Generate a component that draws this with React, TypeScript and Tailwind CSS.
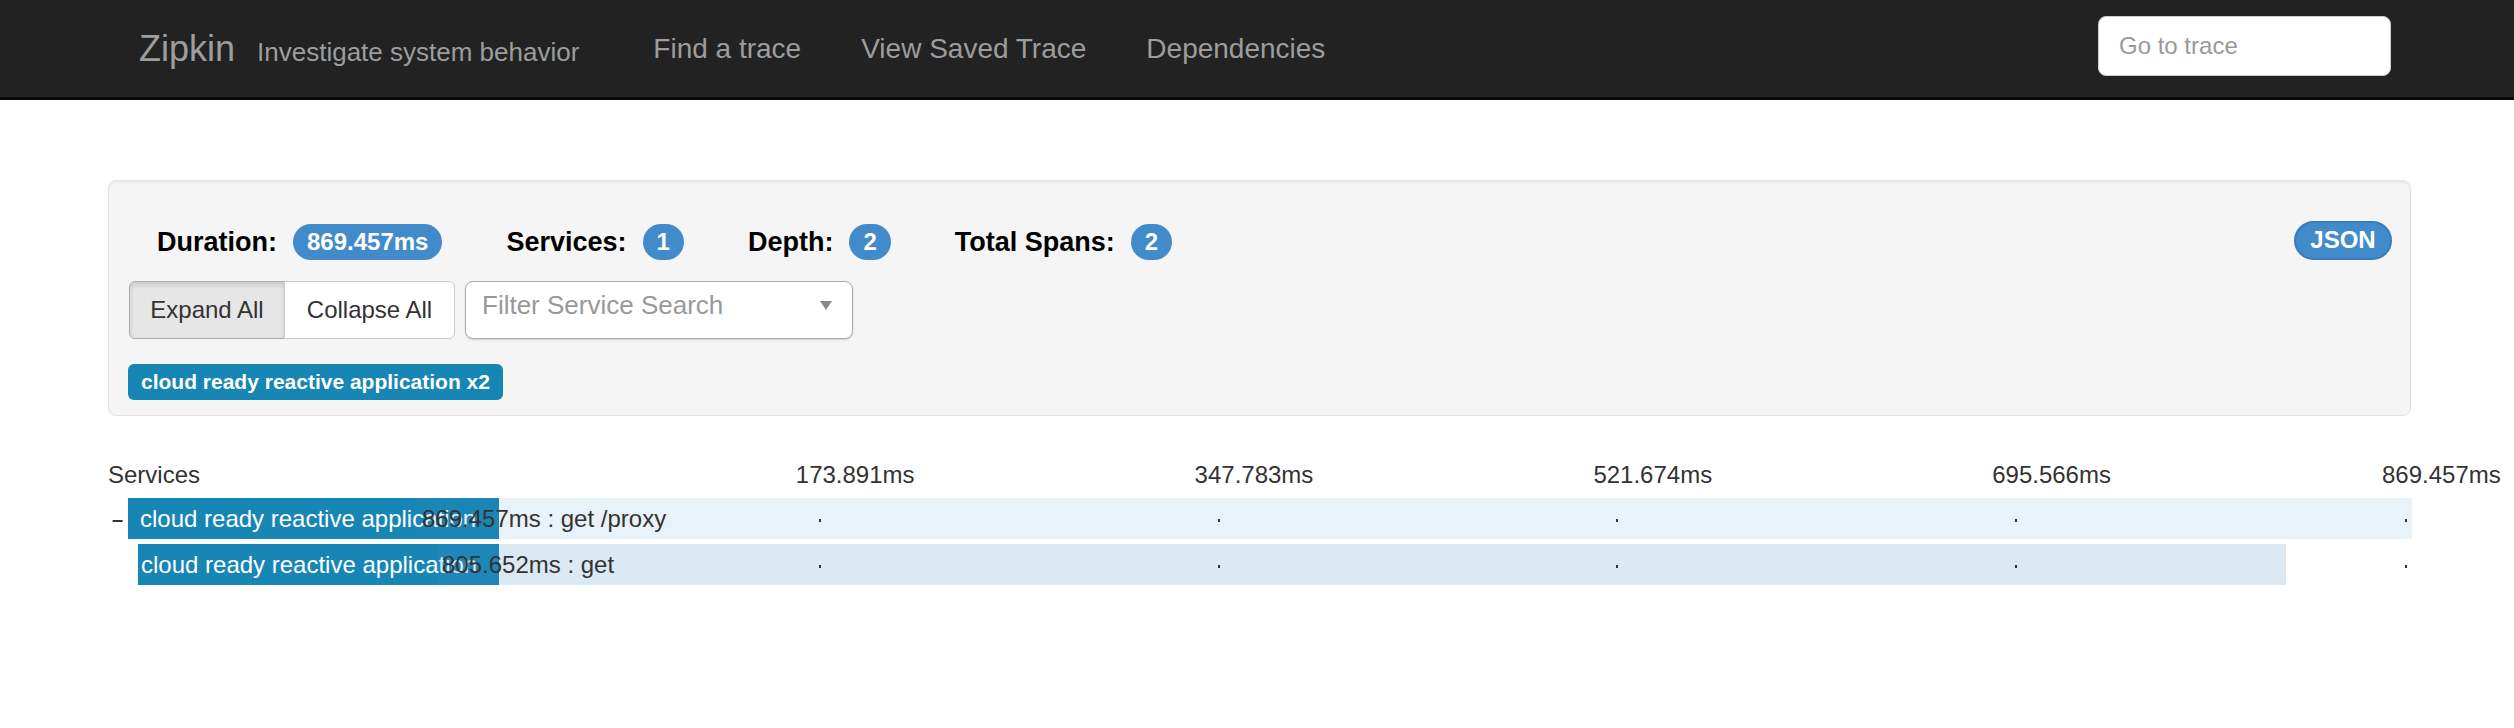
import React from "react";

const total = 869.457;
const origin = 310;
const barSpan = 1994;
const pxPerMs = barSpan / total;

const links = ["Find a trace", "View Saved Trace", "Dependencies"];

const stats = [
  { label: "Duration:", value: "869.457ms", cls: "" },
  { label: "Services:", value: "1", cls: "ml-[64px]" },
  { label: "Depth:", value: "2", cls: "ml-[64px]" },
  { label: "Total Spans:", value: "2", cls: "ml-[64px]" },
];

const spans = [
  {
    name: "get /proxy",
    start: 0,
    duration: 869.457,
    indent: "w-[20px]",
    handle: "w-[371px] pl-[12px]",
    bar: "bg-[rgba(66,139,202,0.11)]",
    toggle: true,
  },
  {
    name: "get",
    start: 8.72,
    duration: 805.652,
    indent: "w-[30px]",
    handle: "w-[361px] pl-[3px]",
    bar: "bg-[rgba(66,139,202,0.19)]",
    toggle: false,
  },
];

const ticks = [1, 2, 3, 4, 5].map((i) => {
  const x = origin + (i * barSpan) / 5;
  return {
    label: ((total * i) / 5).toFixed(3) + "ms",
    labelX: Math.min(x - 21, 2274),
    dotX: Math.min(x + 2, 2297),
  };
});

const Navbar = () => (
  <div className="flex items-center h-[100px] bg-[#222222] border-b-[3px] border-[#080808]">
    <div className="flex items-baseline ml-[139px]">
      <span className="text-[36px] text-[#9d9d9d]">Zipkin</span>
      <span className="ml-[22px] text-[26px] text-[#9d9d9d]">
        Investigate system behavior
      </span>
    </div>
    <nav className="flex ml-[44px]">
      {links.map((l) => (
        <a key={l} className="px-[30px] text-[28px] text-[#9d9d9d]">
          {l}
        </a>
      ))}
    </nav>
    <input
      placeholder="Go to trace"
      className="ml-auto mr-[123px] self-start mt-[16px] w-[293px] h-[60px] rounded-[8px] border border-[#cccccc] bg-white px-[20px] text-[24px] text-[#555] placeholder:text-[#999999] outline-none"
    />
  </div>
);

const Badge = ({ children }: { children: React.ReactNode }) => (
  <span className="flex items-center h-[36px] px-[14px] rounded-full bg-[#428bca] text-white text-[24px] font-bold leading-none">
    {children}
  </span>
);

const TracePanel = () => (
  <div className="rounded-[8px] border border-[#e3e3e3] bg-[#f5f5f5] shadow-[inset_0_2px_2px_rgba(0,0,0,0.05)] pl-[19px] pr-[18px] pt-[41px] pb-[15px]">
    <div className="flex items-center h-[40px] pl-[29px]">
      {stats.map((s) => (
        <div key={s.label} className={`flex items-center gap-[16px] ${s.cls}`}>
          <span className="text-[27px] font-bold text-black">{s.label}</span>
          <Badge>{s.value}</Badge>
        </div>
      ))}
      <button className="ml-auto mb-[4px] flex items-center justify-center w-[98px] h-[39px] rounded-full bg-[#428bca] border-2 border-[#357ebd] text-white text-[24px] font-bold">
        JSON
      </button>
    </div>

    <div className="flex mt-[19px] ml-[1px]">
      <div className="flex">
        <button className="w-[156px] h-[58px] border border-[#adadad] bg-[#e6e6e6] shadow-[inset_0_3px_5px_rgba(0,0,0,0.125)] rounded-l-[6px] text-[24px] text-[#333]">
          Expand All
        </button>
        <button className="w-[171px] h-[58px] -ml-px border border-[#cccccc] bg-white rounded-r-[6px] text-[24px] text-[#333]">
          Collapse All
        </button>
      </div>
      <div className="ml-[10px] flex w-[388px] h-[58px] rounded-[8px] border border-[#aaaaaa] bg-white shadow-[0_1px_2px_rgba(0,0,0,0.15)]">
        <span className="pl-[16px] pt-[8px] text-[26px] leading-[30px] text-[#999999]">
          Filter Service Search
        </span>
        <svg
          className="ml-auto mr-[20px] mt-[19px]"
          width="12"
          height="9"
          viewBox="0 0 12 9"
        >
          <polygon points="0,0 12,0 6,9" fill="#888888" />
        </svg>
      </div>
    </div>

    <div className="mt-[25px] flex items-center w-fit h-[36px] px-[13px] rounded-[6px] bg-[#1786b4] text-white text-[21px] font-bold">
      cloud ready reactive application x2
    </div>
  </div>
);

const Timeline = () => (
  <div className="mt-[45px] text-[24px] text-[#333]">
    <div className="relative h-[28px] leading-[28px]">
      <span>Services</span>
      {ticks.map((t) => (
        <span
          key={t.label}
          className="absolute top-0 whitespace-nowrap"
          style={{ left: t.labelX }}
        >
          {t.label}
        </span>
      ))}
    </div>

    {spans.map((s, i) => (
      <div
        key={s.name}
        className={`relative flex items-center h-[41px] ${i === 0 ? "mt-[9px]" : "mt-[5px]"}`}
      >
        <div className={`${s.indent} pl-[4px] text-[20px] font-bold text-[#333]`}>
          {s.toggle ? "–" : ""}
        </div>
        <div
          className={`${s.handle} h-full flex items-center bg-[#1786b4] text-white whitespace-nowrap overflow-hidden`}
        >
          cloud ready reactive application
        </div>
        <div
          className={`absolute top-0 h-full flex items-center pl-[4px] whitespace-nowrap ${s.bar}`}
          style={{
            left: origin + s.start * pxPerMs,
            width: s.duration * pxPerMs,
          }}
        >
          {s.duration.toFixed(3)}ms : {s.name}
        </div>
        {ticks.map((t) => (
          <span
            key={t.label}
            className="absolute top-[21px] w-[2px] h-[3px] bg-[#333]"
            style={{ left: t.dotX }}
          />
        ))}
      </div>
    ))}
  </div>
);

export default function App() {
  return (
    <div className="min-h-[728px] bg-white font-['Liberation_Sans',Arial,sans-serif]">
      <Navbar />
      <div className="pl-[108px] pr-[103px] pt-[80px]">
        <TracePanel />
        <Timeline />
      </div>
    </div>
  );
}
